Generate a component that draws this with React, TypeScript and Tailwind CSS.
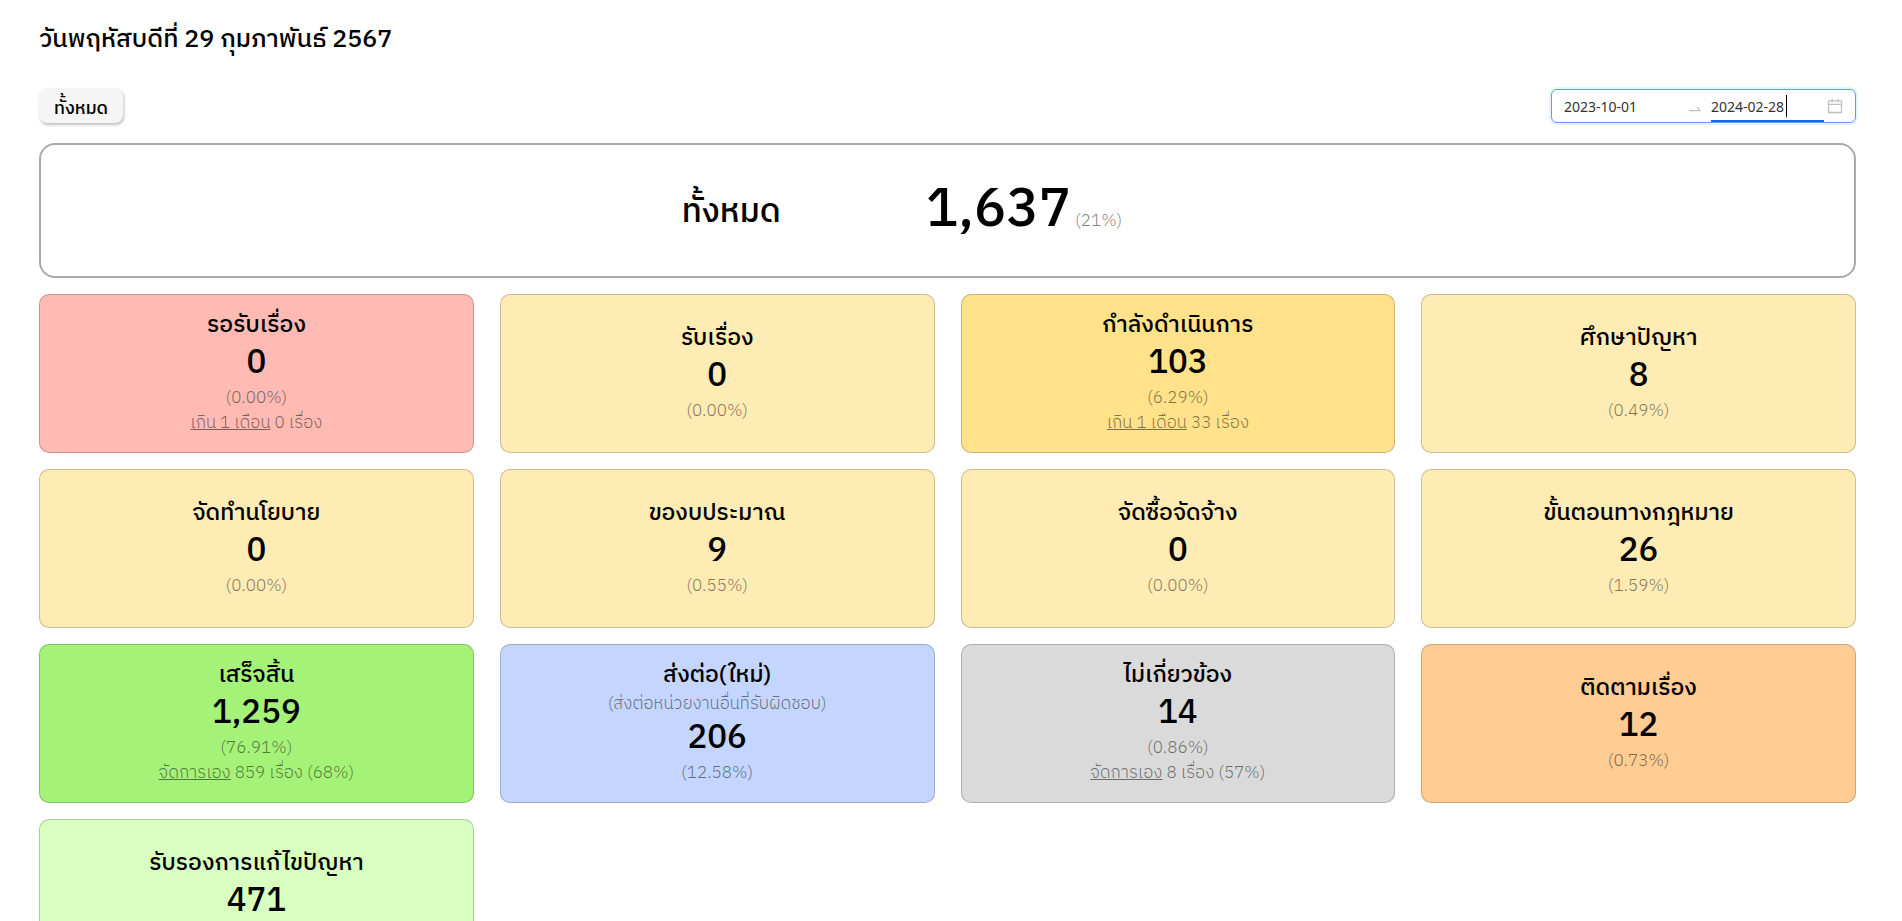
import { useState } from "react";

type Card = {
  title: string;
  subtitle?: string;
  count: string;
  percent: string;
  detail?: { label: string; text: string };
  color: string;
};

const cards: Card[] = [
  { title: "รอรับเรื่อง", count: "0", percent: "(0.00%)", detail: { label: "เกิน 1 เดือน", text: "0 เรื่อง" }, color: "bg-[#ffbab3]" },
  { title: "รับเรื่อง", count: "0", percent: "(0.00%)", color: "bg-[#ffebb4]" },
  { title: "กำลังดำเนินการ", count: "103", percent: "(6.29%)", detail: { label: "เกิน 1 เดือน", text: "33 เรื่อง" }, color: "bg-[#ffe28a]" },
  { title: "ศึกษาปัญหา", count: "8", percent: "(0.49%)", color: "bg-[#ffebb4]" },
  { title: "จัดทำนโยบาย", count: "0", percent: "(0.00%)", color: "bg-[#ffebb4]" },
  { title: "ของบประมาณ", count: "9", percent: "(0.55%)", color: "bg-[#ffebb4]" },
  { title: "จัดซื้อจัดจ้าง", count: "0", percent: "(0.00%)", color: "bg-[#ffebb4]" },
  { title: "ขั้นตอนทางกฎหมาย", count: "26", percent: "(1.59%)", color: "bg-[#ffebb4]" },
  { title: "เสร็จสิ้น", count: "1,259", percent: "(76.91%)", detail: { label: "จัดการเอง", text: "859 เรื่อง (68%)" }, color: "bg-[#a5f278]" },
  { title: "ส่งต่อ(ใหม่)", subtitle: "(ส่งต่อหน่วยงานอื่นที่รับผิดชอบ)", count: "206", percent: "(12.58%)", color: "bg-[#c4d6ff]" },
  { title: "ไม่เกี่ยวข้อง", count: "14", percent: "(0.86%)", detail: { label: "จัดการเอง", text: "8 เรื่อง (57%)" }, color: "bg-[#dadada]" },
  { title: "ติดตามเรื่อง", count: "12", percent: "(0.73%)", color: "bg-[#ffcc94]" },
  { title: "รับรองการแก้ไขปัญหา", count: "471", percent: "(28.77%)", color: "bg-[#d9ffc0]" },
];

function StatusCard({ card }: { card: Card }) {
  return (
    <article
      className={`flex min-h-[159px] flex-col items-center justify-center rounded-[10px] border border-black/20 pb-[3px] text-center ${card.color}`}
    >
      <h2 className="text-[23px] leading-[34px] font-medium">{card.title}</h2>
      {card.subtitle && <p className="text-[17px] leading-[25px] font-light text-black/50">{card.subtitle}</p>}
      <p className="text-[33px] leading-[44px] font-medium">{card.count}</p>
      <p className="text-[17px] leading-[25px] font-light text-black/50">{card.percent}</p>
      {card.detail && (
        <p className="text-[17px] leading-[25px] font-light text-black/50">
          <span className="underline">{card.detail.label}</span> {card.detail.text}
        </p>
      )}
    </article>
  );
}

function DateRange() {
  const [from, setFrom] = useState("2023-10-01");
  const [to, setTo] = useState("2024-02-28");
  return (
    <div className="flex h-[34px] w-[305px] items-center rounded-md border border-[#5c9dff] bg-white px-3 font-['Noto_Sans'] text-sm text-[#333] shadow-[0_0_0_2px_rgba(5,145,255,0.1)]">
      <input
        aria-label="วันที่เริ่มต้น"
        value={from}
        onChange={(e) => setFrom(e.target.value)}
        className="w-0 flex-1 pt-0.5 outline-none"
      />
      <svg className="mx-2 mt-1.5 size-4 shrink-0 fill-black/25" viewBox="0 0 1024 1024" aria-hidden="true">
        <path d="M873.1 596.2l-164-208A32 32 0 00684 376h-64.8c-6.7 0-10.4 7.7-6.3 13l144.3 183H152c-4.4 0-8 3.6-8 8v60c0 4.4 3.6 8 8 8h695.9c26.8 0 41.7-30.8 25.2-51.8z" />
      </svg>
      <div className="flex h-full w-[113px] items-center border-b-2 border-[#1668dc] pt-0.5">
        <input
          aria-label="วันที่สิ้นสุด"
          value={to}
          onChange={(e) => setTo(e.target.value)}
          className="w-[76px] border-r border-black pt-0.5 outline-none"
        />
      </div>
      <svg className="ml-[3px] size-4 shrink-0 fill-black/25" viewBox="64 64 896 896" aria-hidden="true">
        <path d="M880 184H712v-64c0-4.4-3.6-8-8-8h-56c-4.4 0-8 3.6-8 8v64H384v-64c0-4.4-3.6-8-8-8h-56c-4.4 0-8 3.6-8 8v64H144c-17.7 0-32 14.3-32 32v664c0 17.7 14.3 32 32 32h736c17.7 0 32-14.3 32-32V216c0-17.7-14.3-32-32-32zm-40 656H184V460h656v380zM184 392V256h128v48c0 4.4 3.6 8 8 8h56c4.4 0 8-3.6 8-8v-48h256v48c0 4.4 3.6 8 8 8h56c4.4 0 8-3.6 8-8v-48h128v136H184z" />
      </svg>
    </div>
  );
}

export default function App() {
  return (
    <main className="bg-white pt-[22px] pr-[46px] pb-8 pl-[39px] font-['IBM_Plex_Sans_Thai','Noto_Sans_Thai','Noto_Sans',sans-serif] text-black">
      <h1 className="text-[25px] leading-9 font-medium">วันพฤหัสบดีที่ 29 กุมภาพันธ์ 2567</h1>
      <div className="mt-[30px] flex items-center justify-between">
        <button
          type="button"
          className="h-[35px] rounded-lg bg-[#f5f5f5] px-[15px] pt-1.5 text-lg leading-7 font-medium shadow-[1px_2px_3px_rgba(0,0,0,0.25)]"
        >
          ทั้งหมด
        </button>
        <DateRange />
      </div>
      <section className="mt-5 flex h-[135px] items-center justify-center gap-[145px] rounded-2xl border-2 border-[#aaaaaa] pr-[91px]">
        <h2 className="pt-1 text-[33px] font-medium">ทั้งหมด</h2>
        <p className="flex items-baseline gap-1">
          <span className="text-[54px] font-medium">1,637</span>
          <span className="text-[17px] font-light text-black/50">(21%)</span>
        </p>
      </section>
      <div className="mt-4 grid grid-cols-4 gap-x-[26px] gap-y-4">
        {cards.map((card) => (
          <StatusCard key={card.title} card={card} />
        ))}
      </div>
    </main>
  );
}
